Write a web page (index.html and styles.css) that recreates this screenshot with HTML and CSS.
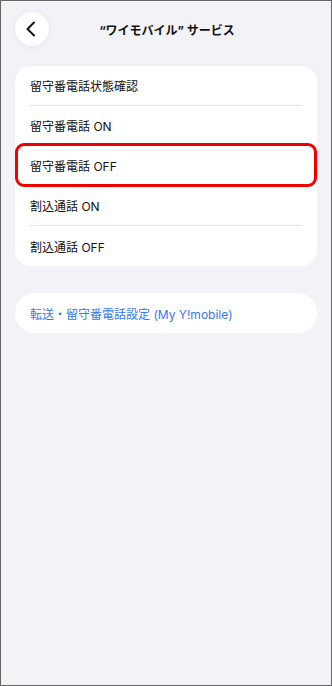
FILE: index.html
```html
<!DOCTYPE html>
<html lang="ja">
<head>
<meta charset="utf-8">
<link rel="stylesheet" href="styles.css">
</head>
<body>
<div class="frame">
  <header class="nav">
    <div class="back">
      <svg width="12" height="16" viewBox="0 0 12 16"><path d="M9 1.5 L2.5 8 L9 14.5" fill="none" stroke="#111" stroke-width="2" stroke-linecap="round" stroke-linejoin="round"/></svg>
    </div>
    <div class="title">“ワイモバイル” サービス</div>
  </header>
  <section class="card">
    <div class="row">留守番電話状態確認</div>
    <div class="row">留守番電話 ON</div>
    <div class="row highlighted">留守番電話 OFF</div>
    <div class="row">割込通話 ON</div>
    <div class="row">割込通話 OFF</div>
  </section>
  <section class="card link-card">
    <div class="row link">転送・留守番電話設定 (My Y!mobile)</div>
  </section>
</div>
</body>
</html>
```

FILE: styles.css
```css
* { box-sizing: border-box; }
html, body { margin: 0; padding: 0; }
body {
  font-family: "Inter", "Noto Sans CJK JP", sans-serif;
  color: #111;
}
.frame {
  width: 332px;
  height: 686px;
  border: 1px solid #666;
  background: #f2f2f7;
  padding: 11px 14px 0 14px;
}
.nav {
  position: relative;
  height: 34px;
  display: flex;
  align-items: center;
  justify-content: center;
}
.back {
  position: absolute;
  left: 0;
  top: 0;
  width: 34px;
  height: 34px;
  border-radius: 50%;
  background: #fff;
  box-shadow: 0 1px 6px rgba(0,0,0,0.06);
  display: flex;
  align-items: center;
  justify-content: center;
  padding-right: 2px;
}
.title {
  font-size: 12px;
  font-weight: 700;
  padding-left: 2px;
}
.card {
  margin-top: 20px;
  background: #fff;
  border-radius: 16px;
  padding: 0 15px;
}
.row {
  position: relative;
  height: 40px;
  display: flex;
  align-items: center;
  font-size: 12px;
  border-bottom: 1px solid #e6e6ea;
}
.row:last-child { border-bottom: none; }
.highlighted::after {
  content: "";
  position: absolute;
  left: -15px;
  right: -15px;
  top: -3px;
  bottom: -2px;
  border: 3.5px solid #f20000;
  border-radius: 9px;
}
.link-card {
  margin-top: 27px;
  border-radius: 20px;
}
.link { color: #3478f6; }
```
